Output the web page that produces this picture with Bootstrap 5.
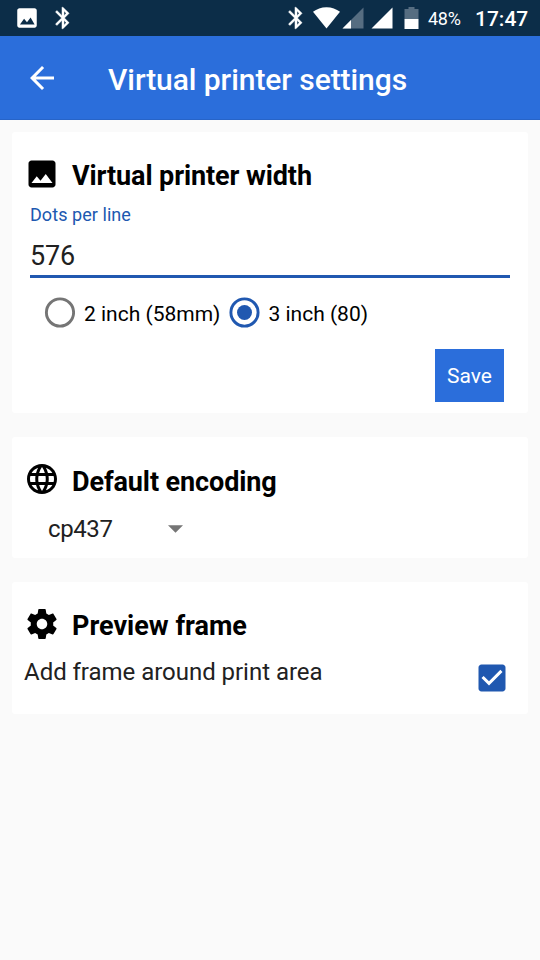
<!DOCTYPE html>
<html lang="en">
<head>
<meta charset="utf-8">
<meta name="viewport" content="width=device-width, initial-scale=1">
<title>Virtual printer settings</title>
<link href="https://cdn.jsdelivr.net/npm/bootstrap@5.3.0/dist/css/bootstrap.min.css" rel="stylesheet">
<style>
  body { font-family: Roboto, "Liberation Sans", sans-serif; background: #fafafa; color: #000; min-height: 960px; overflow: hidden; }
  svg { display: block; flex: none; }
  .status-bar { height: 36px; background: #0c2d48; color: #fff; padding: 0 13px 0 14px; }
  .bt-left { margin-left: 10px; }
  .wifi { margin-left: 4px; }
  .signal-weak { margin-left: 2px; }
  .signal-full { margin-left: 7px; }
  .battery { margin-left: 11px; }
  .level { font-size: 18px; line-height: 36px; width: 47px; margin-left: 9px; padding-top: 1px; letter-spacing: -.3px; }
  .clock { font-size: 21px; line-height: 36px; font-weight: 500; padding-top: 1px; width: 52px; white-space: nowrap; }
  .status-bar .ms-auto { margin-right: 0; }
  .app-bar { height: 84px; background: #2b6edb; border-bottom: 1px solid #2764c8; padding: 0 24px; }
  .app-title { font-size: 30px; font-weight: 500; line-height: 40px; letter-spacing: -.06px; margin: 4px 0 0 48px; color: #fff; }
  .panels { padding: 12px; gap: 24px; }
  .panel { background: #fff; border: 0; border-radius: 3px; }
  .panel-width { height: 281px; padding: 24px 18px 0; }
  .panel-encoding { height: 121px; padding: 24px 18px 0; }
  .panel-frame { height: 132px; padding: 24px 18px 0; }
  .panel-head { height: 36px; margin-left: -6px; gap: 12px; }
  .panel-head h2 { font-size: 27px; font-weight: 700; line-height: 36px; margin: 4px 0 0; }
  .panel-width h2 { letter-spacing: -.1px; }
  .panel-encoding h2 { letter-spacing: -.1px; margin-top: 6px; }
  .field-label { color: #2058b0; font-size: 18px; line-height: 22px; margin-top: 12px; letter-spacing: .06px; }
  .field-input { font-size: 27px; line-height: 36px; height: 52px; padding: 11px 0 0; border: 0; border-bottom: 3px solid #2058b0; border-radius: 0; color: #212121; background: transparent; margin-bottom: 18px; letter-spacing: -.2px; }
  .choice { font-size: 21px; line-height: 31px; gap: 9px; }
  .choice + .choice { gap: 8px; }
  .choice svg { margin-bottom: 1px; }
  .choice span { padding-top: 2px; }
  .choices { padding-left: 14px; gap: 9px; height: 34px; }
  .save-btn { width: 69px; height: 52.5px; font-size: 21px; line-height: 24px; padding: 2px 0 0; border: 0; border-radius: 0; background: #2b6edb; margin: 19px 6px 0 0; }
  .encoding { font-size: 24px; line-height: 32px; letter-spacing: -.4px; color: #212121; margin: 16px 0 0 18px; width: 135px; }
  .frame-text { font-size: 24px; line-height: 32px; letter-spacing: -.03px; color: #212121; }
  .frame-row { margin: 14px 0 0 -6px; }
  .frame-check { margin-top: 4px; }
</style>
</head>
<body>
<svg class="d-none" aria-hidden="true">
  <symbol id="bluetooth" viewBox="0 0 24 24"><path d="M17.71 7.71L12 2h-1v7.59L6.41 5 5 6.41 10.59 12 5 17.59 6.41 19 11 14.41V22h1l5.71-5.71-4.3-4.29 4.3-4.29zM13 5.83l1.88 1.88L13 9.59V5.83zm1.88 10.46L13 18.17v-3.76l1.88 1.88z"/></symbol>
</svg>

<header>
  <div class="status-bar d-flex align-items-center">
    <svg width="26" height="26" viewBox="0 0 24 24" fill="#fff"><path fill-rule="evenodd" d="M21 19V5c0-1.100-.9-2-2-2H5c-1.100 0-2 .9-2 2v14c0 1.100.9 2 2 2h14c1.100 0 2-.9 2-2zM5.500 18l3.800-5.200 2.700 3.200 3.300-4.500L19 18z"/></svg>
    <svg class="bt-left" width="26" height="26" fill="#fff" stroke="#fff" stroke-width=".3"><use href="#bluetooth"/></svg>
    <svg class="ms-auto" width="26" height="26" fill="#fff" stroke="#fff" stroke-width=".3"><use href="#bluetooth"/></svg>
    <svg class="wifi" width="27" height="22" viewBox="0 0 27 22" fill="#fff"><path d="M13.500 21.500 0 4.800C3.700 1.900 8.300.2 13.500.2S23.300 1.900 27 4.800z"/></svg>
    <svg class="signal-weak" width="22" height="22" viewBox="0 0 22 22"><path d="M21.500.5v21H.5z" fill="#566d81"/><path d="M9 13v8.500H.5z" fill="#fff"/></svg>
    <svg class="signal-full" width="22" height="22" viewBox="0 0 22 22"><path d="M21.500.5v21H.5z" fill="#fff"/></svg>
    <svg class="battery" width="15" height="22" viewBox="0 0 15 22"><path d="M4.500 0h6v2H14.500v10H.5V2h4z" fill="#566d81"/><path d="M.5 12h14v10H.5z" fill="#fff"/></svg>
    <span class="level">48%</span>
    <span class="clock">17:47</span>
  </div>
  <nav class="app-bar d-flex align-items-center">
    <svg width="36" height="36" viewBox="0 0 24 24" fill="#fff"><path d="M20 11H7.830l5.590-5.590L12 4l-8 8 8 8 1.410-1.410L7.830 13H20v-2z"/></svg>
    <h1 class="app-title">Virtual printer settings</h1>
  </nav>
</header>

<main class="panels d-flex flex-column">
  <section class="card panel panel-width">
    <div class="panel-head d-flex align-items-center">
      <svg width="36" height="36" viewBox="0 0 24 24"><path d="M21 19V5c0-1.100-.9-2-2-2H5c-1.100 0-2 .9-2 2v14c0 1.100.9 2 2 2h14c1.100 0 2-.9 2-2zM8.500 13.500l2.500 3.010L14.500 12l4.500 6H5l3.500-4.500z"/></svg>
      <h2>Virtual printer width</h2>
    </div>
    <label class="field-label" for="dots">Dots per line</label>
    <input id="dots" class="form-control field-input" type="text" value="576">
    <div class="choices d-flex align-items-center">
      <div class="choice d-flex align-items-center">
        <svg width="31" height="31" viewBox="0 0 31 31"><circle cx="16" cy="15.500" r="13.600" fill="none" stroke="#757575" stroke-width="2.900"/></svg>
        <span>2 inch (58mm)</span>
      </div>
      <div class="choice d-flex align-items-center">
        <svg width="31" height="31" viewBox="0 0 31 31"><circle cx="15.500" cy="15.500" r="13.600" fill="none" stroke="#2058b0" stroke-width="2.900"/><circle cx="15.500" cy="15.500" r="7.500" fill="#2058b0"/></svg>
        <span>3 inch (80)</span>
      </div>
    </div>
    <button class="btn btn-primary save-btn align-self-end" type="button">Save</button>
  </section>

  <section class="card panel panel-encoding">
    <div class="panel-head d-flex align-items-center">
      <svg width="36" height="36" viewBox="0 0 24 24"><path d="M11.990 2C6.470 2 2 6.480 2 12s4.470 10 9.990 10C17.520 22 22 17.520 22 12S17.520 2 11.990 2zm6.930 6h-2.950c-.32-1.250-.78-2.450-1.380-3.560 1.840.63 3.370 1.910 4.330 3.560zM12 4.040c.83 1.200 1.480 2.530 1.910 3.960h-3.820c.43-1.430 1.080-2.760 1.910-3.960zM4.260 14C4.100 13.360 4 12.690 4 12s.1-1.360.26-2h3.380c-.08.66-.14 1.320-.14 2s.06 1.340.14 2H4.260zm.82 2h2.950c.32 1.250.78 2.450 1.380 3.560-1.840-.63-3.370-1.900-4.330-3.560zm2.950-8H5.080c.96-1.660 2.490-2.930 4.330-3.560C8.810 5.550 8.350 6.750 8.030 8zM12 19.960c-.83-1.200-1.480-2.530-1.910-3.960h3.820c-.43 1.430-1.080 2.760-1.910 3.960zM14.340 14H9.660c-.09-.66-.16-1.320-.16-2s.07-1.350.16-2h4.680c.09.65.16 1.320.16 2s-.07 1.340-.16 2zm.25 5.560c.6-1.110 1.060-2.310 1.380-3.560h2.950c-.96 1.650-2.490 2.930-4.330 3.560zM16.360 14c.08-.66.14-1.320.14-2s-.06-1.340-.14-2h3.380c.16.64.26 1.310.26 2s-.1 1.360-.26 2h-3.380z"/></svg>
      <h2>Default encoding</h2>
    </div>
    <div class="encoding d-flex justify-content-between align-items-center">
      <span>cp437</span>
      <svg width="15" height="8" viewBox="0 0 15 8"><path d="M0 .3h15L7.500 7.800z" fill="#757575"/></svg>
    </div>
  </section>

  <section class="card panel panel-frame">
    <div class="panel-head d-flex align-items-center">
      <svg width="36" height="36" viewBox="0 0 24 24"><path d="M19.430 12.980c.04-.32.07-.64.07-.98s-.03-.66-.07-.98l2.110-1.650c.19-.15.24-.42.12-.64l-2-3.460c-.12-.22-.39-.3-.61-.22l-2.490 1c-.52-.4-1.080-.73-1.690-.98l-.38-2.650C14.460 2.180 14.250 2 14 2h-4c-.25 0-.46.18-.49.42l-.38 2.650c-.61.25-1.170.59-1.690.98l-2.490-1c-.23-.09-.49 0-.61.22l-2 3.460c-.13.22-.07.49.12.64l2.110 1.650c-.04.32-.07.65-.07.98s.03.66.07.98l-2.110 1.650c-.19.15-.24.42-.12.64l2 3.460c.12.22.39.3.61.22l2.490-1c.52.4 1.080.73 1.690.98l.38 2.650c.03.24.24.42.49.42h4c.25 0 .46-.18.49-.42l.38-2.650c.61-.25 1.170-.59 1.690-.98l2.490 1c.23.09.49 0 .61-.22l2-3.460c.12-.22.07-.49-.12-.64l-2.110-1.650zM12 15.500c-1.930 0-3.500-1.570-3.500-3.500s1.570-3.500 3.500-3.500 3.500 1.570 3.500 3.500-1.570 3.500-3.500 3.500z"/></svg>
      <h2>Preview frame</h2>
    </div>
    <div class="frame-row d-flex justify-content-between align-items-start">
      <span class="frame-text">Add frame around print area</span>
      <svg class="frame-check" width="36" height="36" viewBox="0 0 24 24" fill="#2058b0"><path d="M19 3H5c-1.110 0-2 .9-2 2v14c0 1.100.89 2 2 2h14c1.110 0 2-.9 2-2V5c0-1.100-.89-2-2-2zm-9 14l-5-5 1.410-1.410L10 14.170l7.590-7.590L19 8l-9 9z"/></svg>
    </div>
  </section>
</main>
<script src="https://cdn.jsdelivr.net/npm/bootstrap@5.3.0/dist/js/bootstrap.bundle.min.js"></script>
</body>
</html>
